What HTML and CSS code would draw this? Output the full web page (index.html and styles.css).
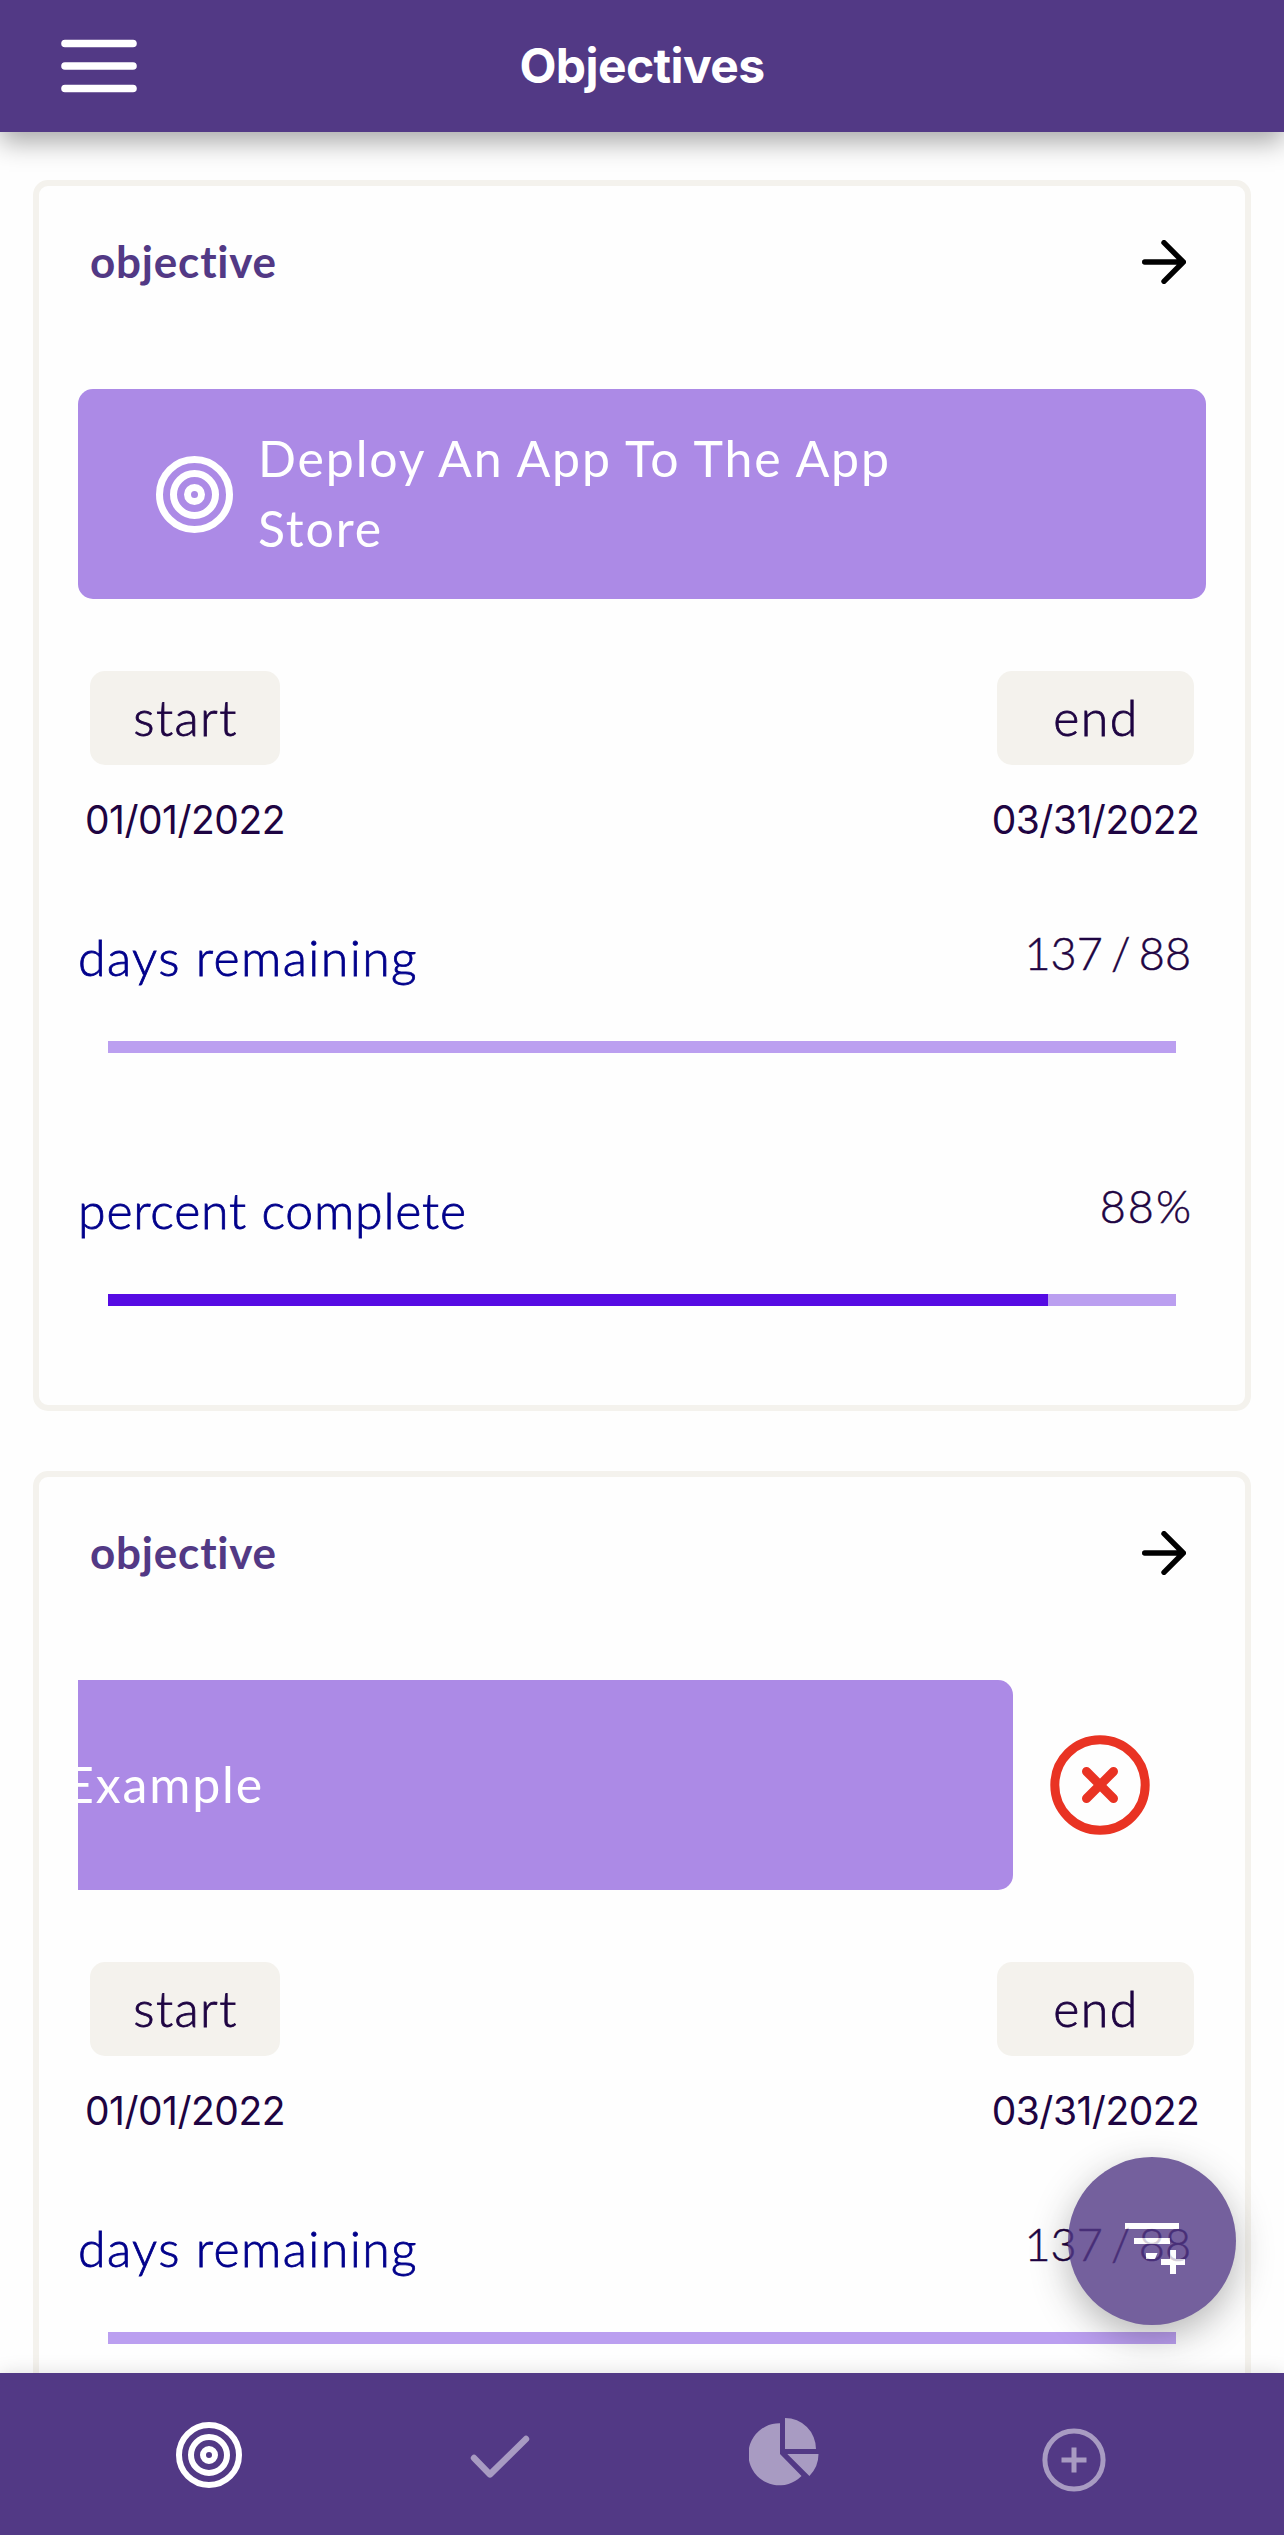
FILE: index.html
```html
<!DOCTYPE html>
<html lang="en">
<head>
<meta charset="utf-8">
<title>Objectives</title>
<link rel="stylesheet" href="styles.css">
</head>
<body>
<svg class="sprite" aria-hidden="true">
  <symbol id="target" viewBox="0 0 22 22"><g fill="none" stroke="currentColor" stroke-width="2"><circle cx="11" cy="11" r="10"/><circle cx="11" cy="11" r="6"/><circle cx="11" cy="11" r="2"/></g></symbol>
  <symbol id="arrow" viewBox="0 0 44 44"><path d="M2.7 22H41.3M22 2.7L41.3 22L22 41.3" fill="none" stroke="currentColor" stroke-width="5.4" stroke-linecap="round" stroke-linejoin="round"/></symbol>
</svg>
<header class="topbar">
  <button class="menu" aria-label="Menu"><svg width="76" height="54" viewBox="0 0 76 54"><path d="M4 4.5H72M4 27H72M4 49.5H72" stroke="#fff" stroke-width="7.6" stroke-linecap="round"/></svg></button>
  <h1 class="title">Objectives</h1>
</header>
<main class="list">
  <article class="card">
    <div class="card-head"><h2 class="card-label">objective</h2><svg class="arrow"><use href="#arrow"/></svg></div>
    <div class="swipe">
      <div class="banner"><svg class="banner-icon"><use href="#target"/></svg><p class="banner-text">Deploy An App To The App Store</p></div>
    </div>
    <div class="dates">
      <div class="date date-start"><span class="chip chip-start">start</span><span class="day">01/01/2022</span></div>
      <div class="date date-end"><span class="chip chip-end">end</span><span class="day">03/31/2022</span></div>
    </div>
    <div class="metric"><div class="metric-row"><span class="metric-name days">days remaining</span><span class="metric-value ratio">137 / 88</span></div><div class="bar"></div></div>
    <div class="metric"><div class="metric-row"><span class="metric-name percent">percent complete</span><span class="metric-value pct">88%</span></div><div class="bar"><div class="fill" style="width:88%"></div></div></div>
  </article>
  <article class="card">
    <div class="card-head"><h2 class="card-label">objective</h2><svg class="arrow"><use href="#arrow"/></svg></div>
    <div class="swipe swiped">
      <div class="banner"><svg class="banner-icon"><use href="#target"/></svg><p class="banner-text">Example</p></div>
      <button class="remove" aria-label="Remove"><svg width="100" height="100" viewBox="0 0 100 100"><g fill="none" stroke="#e93323" stroke-width="9"><circle cx="50" cy="50" r="45.2"/><path d="M36.5 36.5L63.5 63.5M63.5 36.5L36.5 63.5" stroke-linecap="round"/></g></svg></button>
    </div>
    <div class="dates">
      <div class="date date-start"><span class="chip chip-start">start</span><span class="day">01/01/2022</span></div>
      <div class="date date-end"><span class="chip chip-end">end</span><span class="day">03/31/2022</span></div>
    </div>
    <div class="metric"><div class="metric-row"><span class="metric-name days">days remaining</span><span class="metric-value ratio">137 / 88</span></div><div class="bar"></div></div>
  </article>
</main>
<button class="fab" aria-label="Add filter"><svg width="60" height="51" viewBox="0 0 60 51" fill="#fff"><path d="M0 0H54V6H0ZM9 15H45V21H9ZM21 30H32.5L30 36H21ZM36 36H45V27H51V36H60V42H51V51H45V42H36Z"/></svg></button>
<nav class="tabs">
  <a class="tab tab-target"><svg width="66" height="66"><use href="#target"/></svg></a>
  <a class="tab tab-check"><svg width="60" height="44" viewBox="0 0 60 44"><path d="M4 23L20 39.4L56 4" fill="none" stroke="currentColor" stroke-width="6.4" stroke-linecap="round" stroke-linejoin="round"/></svg></a>
  <a class="tab tab-pie"><svg width="70" height="68" viewBox="0 0 70 68" fill="currentColor"><path d="M31 5.3V36L52.5 58A31 31 0 1 1 31 5.3ZM36 0A31 31 0 0 1 67 31H36ZM38.3 36H69.5A31 31 0 0 1 60.4 58Z"/></svg></a>
  <a class="tab tab-add"><svg width="64" height="64" viewBox="0 0 64 64"><g fill="none" stroke="currentColor" stroke-width="5"><circle cx="32" cy="32" r="29.1"/><path d="M19.5 32H44.5M32 19.5V44.5"/></g></svg></a>
</nav>
</body>
</html>
```
FILE: styles.css
```css
* { box-sizing: border-box; }
body {
  position: relative;
  margin: 0;
  height: 2535px;
  overflow: hidden;
  display: flex;
  flex-direction: column;
  background: #fefefe;
  color: #1e0442;
  font-family: Lato, "Open Sans", sans-serif;
}
h1, h2, p { margin: 0; }
button { border: 0; padding: 0; background: none; }
svg { display: block; }
.sprite { position: absolute; width: 0; height: 0; }

.topbar {
  z-index: 1;
  flex: none;
  display: grid;
  grid-template-columns: 1fr auto 1fr;
  align-items: center;
  height: 132px;
  padding: 0 61px;
  background: #523985;
  box-shadow: 0 10px 25px rgba(0, 0, 0, .34);
}
.title {
  color: #fff;
  font: 700 48px/60px Inter, sans-serif;
  letter-spacing: -.6px;
}

.list {
  flex: 1;
  min-height: 0;
  overflow: hidden;
  display: flex;
  flex-direction: column;
  gap: 60px;
  padding: 48px 33px 0;
}
.card {
  flex: none;
  height: 1231px;
  padding: 0 39px;
  border: 6px solid #f4f2ed;
  border-radius: 15px;
}
.card-head {
  display: flex;
  justify-content: space-between;
  align-items: center;
  height: 152px;
  padding: 0 20px 0 12px;
}
.card-label {
  padding-bottom: 3px;
  color: #523985;
  font-size: 44px;
  font-weight: 700;
  line-height: 60px;
  letter-spacing: .8px;
}
.arrow { width: 44px; height: 44px; color: #000; }

.swipe {
  display: flex;
  height: 210px;
  margin-top: 51px;
  overflow: hidden;
}
.banner {
  flex: none;
  display: flex;
  align-items: center;
  gap: 25px;
  width: 1128px;
  padding-left: 78px;
  border-radius: 15px;
  background: #ac8ae6;
  color: #fff;
}
.banner-icon { flex: none; width: 77px; height: 77px; }
.banner-text {
  width: 700px;
  padding-bottom: 3px;
  font-size: 50px;
  line-height: 70px;
  letter-spacing: 1.85px;
}
.swiped .banner { margin-left: -193px; }
.remove { flex: none; margin-left: 37px; }

.dates {
  display: flex;
  justify-content: space-between;
  margin-top: 72px;
  padding: 0 8px 0 5px;
}
.date { display: flex; flex-direction: column; align-items: center; white-space: nowrap; }
.date-start { width: 204px; }
.date-end { width: 205px; }
.chip {
  height: 94px;
  border-radius: 15px;
  background: #f4f2ed;
  font-size: 50px;
  font-weight: 300;
  line-height: 92px;
  letter-spacing: 1.4px;
  text-align: center;
  text-indent: 1px;
  -webkit-text-stroke: .8px currentColor;
}
.chip-start { width: 190px; }
.chip-end { width: 197px; }
.day { margin-top: 31px; font: 400 39px/47px Inter, sans-serif; letter-spacing: -.5px; }

.metric { height: 253px; }
.metric-row {
  display: flex;
  justify-content: space-between;
  align-items: flex-start;
  height: 198px;
  padding: 80px 15px 0 0;
}
.metric-name {
  color: #00008b;
  font-size: 50px;
  font-weight: 300;
  line-height: 68px;
  -webkit-text-stroke: .8px currentColor;
}
.days { letter-spacing: 1.4px; }
.percent { letter-spacing: .8px; }
.metric-value {
  font-size: 45px;
  font-weight: 300;
  line-height: 60px;
  -webkit-text-stroke: .5px currentColor;
}
.ratio { word-spacing: -4px; }
.pct { margin-right: -2px; letter-spacing: 2px; }
.bar { height: 12px; margin: 0 30px; background: #bb9ff0; }
.fill { height: 100%; background: #560be3; }

.fab {
  position: absolute;
  left: 1068px;
  top: 2157px;
  width: 168px;
  height: 168px;
  padding: 15px 0 0 57px;
  border-radius: 50%;
  background: #523985;
  opacity: .8;
  box-shadow: 0 12px 36px rgba(0, 0, 0, .35);
}

.tabs {
  position: relative;
  flex: none;
  display: grid;
  grid-template-columns: repeat(4, 288px);
  justify-content: center;
  height: 162px;
  padding-top: 45px;
  background: #523985;
  box-shadow: 0 0 18px rgba(0, 0, 0, .13);
}
.tab { display: flex; flex-direction: column; align-items: center; color: #a89bc2; }
.tab-target { padding: 4px 2px 0 0; color: #fff; }
.tab-check { padding: 17px 0 0 4px; }
.tab-pie { padding-right: 4px; }
.tab-add { padding-top: 10px; }
```
